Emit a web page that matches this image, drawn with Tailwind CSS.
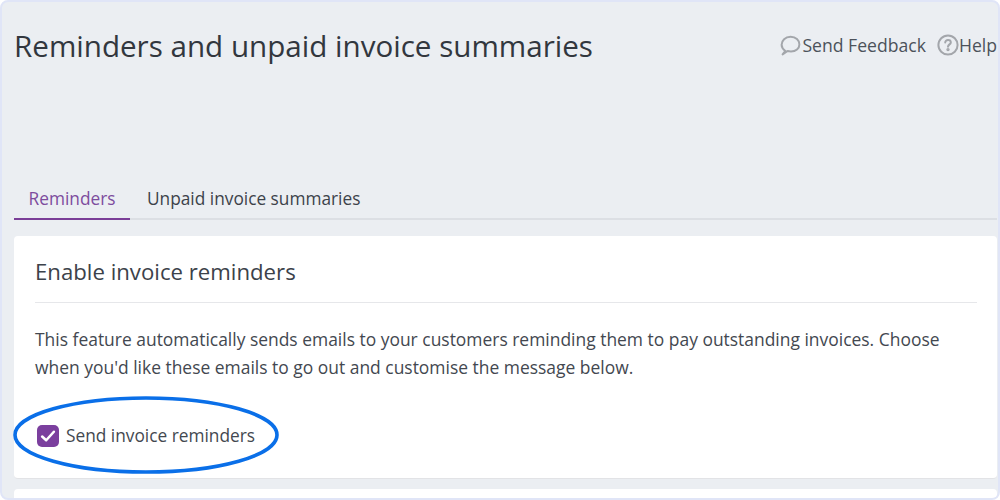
<!DOCTYPE html>
<html lang="en">
<head>
    <meta charset="UTF-8">
    <title>Reminders and unpaid invoice summaries</title>
    <script src="https://cdn.jsdelivr.net/npm/@tailwindcss/browser@4"></script>
</head>
<body class="bg-white">
    <div class="relative w-[1000px] h-[500px] overflow-hidden bg-[#ebeef2] border-2 border-[#e0e5f7] rounded-lg font-['Open_Sans',sans-serif] text-[#3c424a]">
        <header class="flex justify-between items-start pl-3 h-[180px]">
            <h1 class="mt-[23px] text-[29.6px] leading-[42px] text-[#32373e]">Reminders and unpaid invoice summaries</h1>
            <div class="flex items-center mt-[31px] text-[17.6px] leading-6 text-[#4c525a] whitespace-nowrap mr-[1px]">
                <svg class="w-[21px] h-[21px]" viewBox="0 0 21 21" fill="none" stroke="#a3a6ab" stroke-width="2">
                    <path d="M5.4 16 C3.2 14.4 1.6 12.4 1.6 9.8 C1.6 5.4 5.2 1.8 10.6 1.8 C15.8 1.8 19.4 5.4 19.4 9.4 C19.4 13.4 15.8 16.4 11 16.4 C9.6 16.4 8.6 16.3 7.6 16 L2.6 19.4 Z" stroke-linejoin="round"/>
                </svg>
                <span class="ml-[1px]">Send Feedback</span>
                <svg class="ml-[11px] w-[22px] h-[22px]" viewBox="0 0 22 22" fill="none" stroke="#a3a6ab" stroke-width="2">
                    <circle cx="11" cy="11" r="9.6"/>
                    <path d="M8.2 8.6 C8.2 6.9 9.5 6 11 6 C12.6 6 13.8 7 13.8 8.4 C13.8 10.3 11 10.5 11 12.8" stroke-linecap="round"/>
                    <circle cx="11" cy="15.6" r="0.7" fill="#a3a6ab"/>
                </svg>
                <span>Help</span>
            </div>
        </header>

        <nav class="flex ml-3 mr-[1px] h-[38px] border-b-2 border-[#dcdfe4] text-[17.3px]">
            <a class="w-[116px] h-[38px] pt-[4px] text-center text-[#7d4c9e] border-b-2 border-[#7a3e97]">Reminders</a>
            <a class="pl-[17px] pt-[4px] text-[#3c424a]">Unpaid invoice summaries</a>
        </nav>

        <section class="ml-3 mr-[1px] mt-[16px] h-[243px] bg-white rounded pl-[21px] pr-[20px] border-b border-[#e2e3e6]">
            <h2 class="pt-[20px] pb-[14px] text-[22.2px] leading-[32px] text-[#3c424a] border-b border-[#e6e7ea]">Enable invoice reminders</h2>
            <p class="mt-[22px] text-[17.45px] leading-[28px] text-[#434850]">This feature automatically sends emails to your customers reminding them to pay outstanding invoices. Choose when you'd like these emails to go out and customise the message below.</p>
            <label class="flex items-center mt-[43px] text-[17.3px] leading-6 text-[#434850]">
                <span class="flex items-center justify-center w-[22px] h-[22px] mr-[7px] ml-[2px] rounded-[5px] bg-[#7b3f9e]">
                    <svg class="w-[16px] h-[16px]" viewBox="0 0 15 15" fill="none" stroke="#fff" stroke-width="2.4" stroke-linecap="round" stroke-linejoin="round"><path d="M2 8 L5.8 11.5 L13 3.5"/></svg>
                </span>
                Send invoice reminders
            </label>
        </section>

        <div class="ml-3 mr-[1px] mt-[10px] h-[20px] bg-white rounded-t"></div>

        <svg class="absolute left-[11px] top-[387px]" width="268" height="92" viewBox="0 0 268 92" fill="none">
            <ellipse cx="133" cy="46" rx="131" ry="37" stroke="#0a6fe8" stroke-width="3.6"/>
        </svg>
    </div>
</body>
</html>
